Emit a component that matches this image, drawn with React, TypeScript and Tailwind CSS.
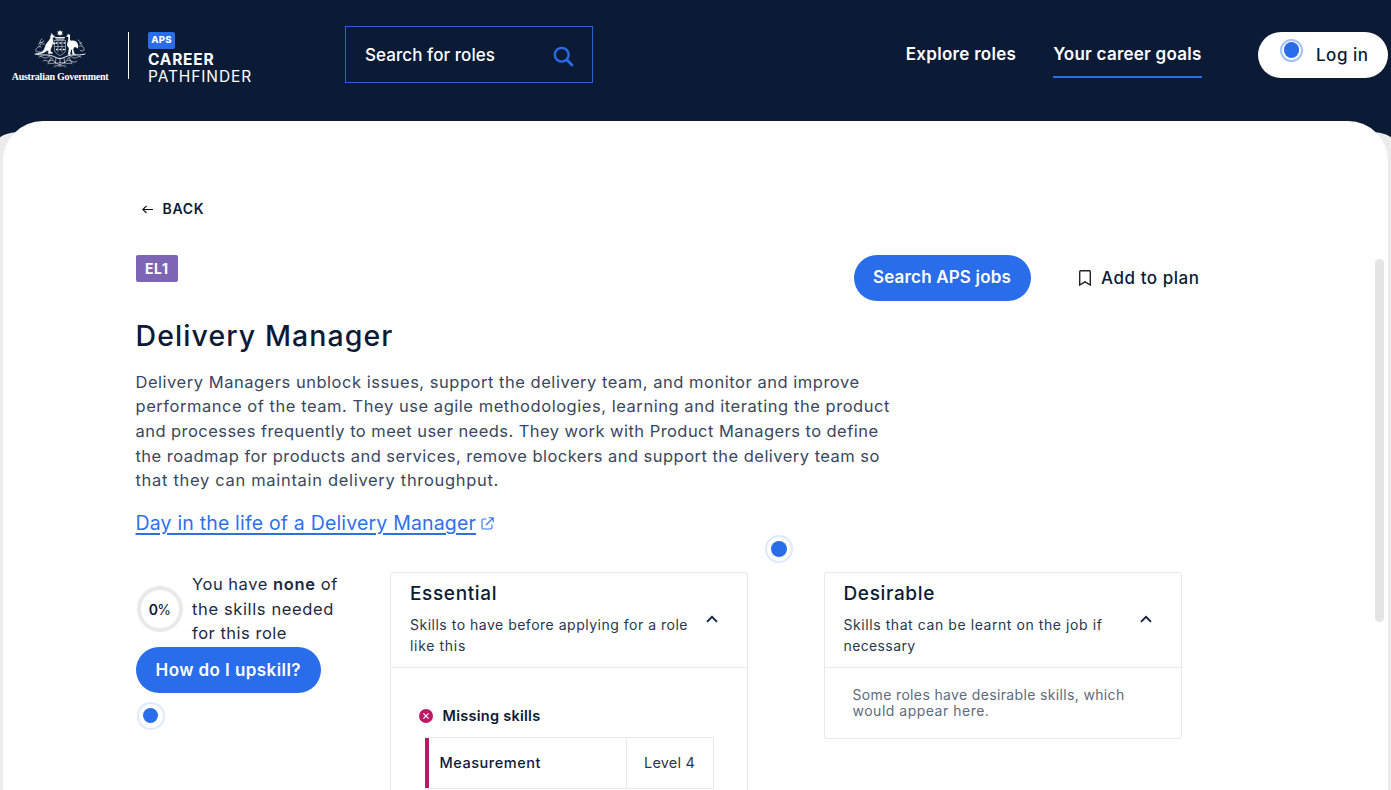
import type { ReactNode } from "react";

function Crest() {
  return (
    <svg width="52" height="38" viewBox="0 0 52 38" fill="none" stroke="#fff" strokeLinecap="round">
      <path d="M26 0l.9 1.6 1.9-.2-.9 1.6.9 1.7-1.9-.2L26 6l-.9-1.5-1.9.2.9-1.7-.9-1.6 1.9.2z" fill="#fff" stroke="none" />
      <path d="M21.5 7.5h9M22 9h8" strokeWidth="1" strokeDasharray="1.6 .6" />
      <path d="M20.5 10.5h11v9.5c0 2.6-3 4.2-5.500 5.500-2.500-1.300-5.500-2.900-5.500-5.500z" strokeWidth=".7" opacity=".7" />
      <path d="M24 11v11M28 11v11M21 16.500h10" strokeWidth=".8" opacity=".6" />
      <path d="M22 13h1M26 13h1M30 13h.5M22.500 19.500h.8M26 19.500h.8M29.500 19.500h.8" strokeWidth="1.300" />
      <path d="M17.800 3.600l1 1.700 1.800.9-.2 1-2 .4c.3 1.600.9 3 .6 4.800l2.200 1-.3.8-2.500-.4c-.2 2.500-1.200 3.800-1.700 5l-.3 2.700 2 1v.9h-4.200l.3-3.300c-1.500.4-2.800 1.600-4.300 2.400-2.300 1.200-5.300 1.500-8.200 1.200 3-.5 5.600-1.300 7.400-3.200 1.600-1.800 1.700-5 3.400-7.200 1.300-1.700 2.600-2.700 3.500-4.700l.3-2.200z" fill="#fff" stroke="#fff" strokeWidth=".4" />
      <path d="M33.300 5.300c.2-1 1.600-1.400 2.400-.6.7.8.3 2.300.2 3.800 0 1.200.4 2 1.500 2.200 2.500-.6 5 .3 6.200 2.700.8 1.700.9 3.700.2 5.300-1-1.500-2.200-1.700-3.600-1.500l-1 2.200 1.200 4 1.500.8v.6h-3.400l-.6-4.700-.8-.7-.9 4.700 1.200.7h-3.500l1-6.700c-1.600-1.400-2.300-3.300-1.500-5.400.5-1.400 1-3 .9-5.800l-2.300-.5z" fill="#fff" stroke="none" />
      <path d="M8 9c-3 1.500-1 4-3.500 5.500M10 11c-3 .5-2.500 3.500-5 6M7 17c-2-1-4 0-5 2.500s2 3 4 2M44 10c3 1 1 4 4 5M45.500 16c2-.5 4.500.5 4.500 3s-3 2.500-4 1M8.500 14h2M6 12.500h2M46 13.500l2-1" strokeWidth=".8" strokeDasharray="2 .7" opacity=".7" />
      <path d="M1 24c6 1.800 12 .2 17 1.800 3 1 5 2.700 8 2.700s5-1.700 8-2.700c5-1.600 11 0 17-1.800" strokeWidth="1" strokeDasharray="2.400 .8" />
      <path d="M5 27c3-2 5 2.500 8 .5s5 .5 6 2M47 27c-3-2-5 2.500-8 .5s-5 .5-6 2M9 31c2-2 4 1 6 0s4-1 6 1 3 1 5 .5 3 1.500 5-.5 4-2 6-1 4 2 6 0M14 34c2-2 4 .5 6-1s3 2 6 1.500 4-3 6-1.500 4-1 6 1M20 37c2-2 4-1 6-1s4-1 6 1M17 28l-3 5M35 28l3 5M26 28v8M22 28l-1 6M30 28l1 6" strokeWidth=".75" strokeDasharray="1.800 .7" opacity=".75" />
    </svg>
  );
}

function Beacon() {
  return (
    <span className="flex size-7 shrink-0 items-center justify-center rounded-full border-2 border-[#dfe9fd]">
      <span className="size-[15.5px] rounded-full bg-[#296deb]" />
    </span>
  );
}

function Chevron() {
  return (
    <svg className="-mt-0.5 mr-[29px] shrink-0" width="12" height="8" viewBox="0 0 12 8" fill="none" stroke="#0b1b36" strokeWidth="1.700">
      <path d="M1 6.800l5-5 5 5" />
    </svg>
  );
}

function SkillCard({ title, children, body, className }: { title: string; children: ReactNode; body: ReactNode; className: string }) {
  return (
    <section className={`w-[358px] rounded-[3px] border border-[#e8e9ea] ${className}`}>
      <header className="flex h-[95px] items-center justify-between border-b border-[#e8e9ea] pl-[19px]">
        <div className="self-start pt-[9px]">
          <h2 className="text-[19px] leading-6 font-medium tracking-[0.034em]">{title}</h2>
          <p className="mt-2 text-[14px] leading-[21px] text-[#2a374e]">{children}</p>
        </div>
        <Chevron />
      </header>
      {body}
    </section>
  );
}

function Header() {
  return (
    <header className="flex h-[121px] items-start">
      <div className="ml-3 flex w-24 flex-col items-center pt-[30px]">
        <Crest />
        <span className="mt-[3px] text-[10px] leading-3 font-bold tracking-[-0.025em] whitespace-nowrap font-['Liberation_Serif',serif]">Australian Government</span>
      </div>
      <div className="mt-8 ml-5 h-[47px] w-px bg-white" />
      <div className="mt-8 ml-[19px] flex w-[110px] flex-col items-start">
        <span className="flex h-[17px] w-[27px] items-center justify-center rounded-[2px] bg-[#296deb] text-[9.500px] font-extrabold tracking-[0.020em]">APS</span>
        <span className="mt-[3px] text-[15.500px] leading-4 font-bold tracking-[0.050em]">CAREER</span>
        <span className="text-[15.500px] leading-[17px] tracking-[0.058em]">PATHFINDER</span>
      </div>
      <div className="mt-[26px] ml-[87px] flex h-[57px] w-[248px] items-center justify-between border border-[#2563d8] pt-[3px] pr-[18px] pl-[19px]">
        <span className="text-[17px] font-medium tracking-[0.004em]">Search for roles</span>
        <svg width="21" height="21" viewBox="0 0 21 21" fill="none" stroke="#296deb" strokeWidth="2.300" strokeLinecap="round">
          <circle cx="8.700" cy="8.700" r="6.900" />
          <path d="M13.800 13.800l5.200 5.200" strokeWidth="2.700" />
        </svg>
      </div>
      <nav className="mt-[42px] ml-auto flex gap-[37px] text-[17px] leading-6 font-semibold">
        <a className="tracking-[0.017em]">Explore roles</a>
        <a className="h-[35.500px] border-b-2 border-[#296deb] tracking-[0.014em]">Your career goals</a>
      </nav>
      <button className="mt-8 mr-[3px] ml-[56px] flex h-[46px] w-[130.500px] items-start rounded-full bg-white text-[#0b1b36]">
        <span className="mt-[6.500px] ml-[22.500px] flex size-[23px] items-center justify-center rounded-full border-2 border-[#a5c1f8]">
          <span className="size-[15.500px] rounded-full bg-[#296deb]" />
        </span>
        <span className="mt-[11px] ml-[13px] text-[17px] leading-6 font-medium tracking-[0.030em]">Log in</span>
      </button>
    </header>
  );
}

export default function App() {
  return (
    <div className="relative isolate h-[790px] w-[1391px] overflow-hidden bg-[#0b1b36] text-white font-['Inter','Liberation_Sans',sans-serif]">
      <div className="absolute -inset-x-4 top-[132px] bottom-0 -z-10 rounded-t-[34px] bg-[#ececec]" />
      <Header />
      <main className="relative mx-[3px] h-[669px] rounded-t-[40px] bg-white pl-[132.500px] text-[#0b1b36]">
        <div className="absolute top-[138px] right-[4px] h-[363px] w-[9px] rounded-full bg-[#e4e4e4]" />
        <div className="flex items-center gap-2.5 pt-[78px] pl-[6px] text-[14px] leading-5 font-semibold tracking-[0.050em]">
          <svg width="11" height="9" viewBox="0 0 11 9" fill="none" stroke="#111" strokeWidth="1.200">
            <path d="M11 4.500H1M4.500.8L.8 4.500l3.700 3.700" />
          </svg>
          BACK
        </div>
        <div className="mt-9 flex h-[46px] items-start">
          <span className="flex h-[26.500px] w-[42.500px] items-center justify-center rounded-[2px] bg-[#7c65b4] text-[14px] font-bold tracking-[0.040em] text-white">EL1</span>
          <button className="ml-[675.500px] flex h-[46px] w-[177px] items-center justify-center rounded-full bg-[#296deb] text-[17px] font-semibold tracking-[0.010em] text-white">Search APS jobs</button>
          <div className="mt-[11px] ml-[48.500px] flex items-center gap-[10px] text-[17px] leading-6 font-medium tracking-[0.032em]">
            <svg width="12" height="16" viewBox="0 0 12 16" fill="none" stroke="#222" strokeWidth="1.400">
              <path d="M.7 15V1.700Q.7.800 1.600.800h8.800q.9 0 .9.900V15L6 11.800z" />
            </svg>
            Add to plan
          </div>
        </div>
        <h1 className="mt-[15px] text-[28.500px] leading-10 font-medium tracking-[0.038em]">Delivery Manager</h1>
        <p className="mt-[13.500px] flex flex-col text-[16.500px] leading-[24.700px] whitespace-nowrap text-[#3a475c]">
          <span className="tracking-[0.0318em]">Delivery Managers unblock issues, support the delivery team, and monitor and improve </span>
          <span className="tracking-[0.0329em]">performance of the team. They use agile methodologies, learning and iterating the product </span>
          <span className="tracking-[0.0272em]">and processes frequently to meet user needs. They work with Product Managers to define </span>
          <span className="tracking-[0.0286em]">the roadmap for products and services, remove blockers and support the delivery team so </span>
          <span className="tracking-[0.0416em]">that they can maintain delivery throughput.</span>
        </p>
        <div className="mt-4 flex items-center gap-[5px] text-[#2f70ea]">
          <a className="text-[19.500px] leading-7 tracking-[0.009em] underline decoration-[1.500px] underline-offset-[3px]">Day in the life of a Delivery Manager</a>
          <svg width="13" height="13" viewBox="0 0 13 13" fill="none" stroke="currentColor" strokeWidth="1.100">
            <path d="M5.500 2H2.600Q1 2 1 3.600v6.800Q1 12 2.600 12h6.800q1.600 0 1.600-1.600V7.500M7.800.800h4.400v4.400M12 1L5 8" />
          </svg>
        </div>
        <div className="relative mt-[35px] flex h-[260px] items-start">
          <div className="absolute -top-[37px] left-[629.500px]"><Beacon /></div>
          <div className="w-[254.500px]">
            <div className="flex h-[75px]">
              <div className="mt-[14px] ml-[1px] flex size-[46px] items-center justify-center rounded-full border-[4.500px] border-[#e8eaea] text-[14px] font-semibold">
                <span className="tracking-[-0.046em]">0<span className="font-normal">%</span></span>
              </div>
              <p className="ml-[9.500px] flex flex-col text-[16.500px] leading-[24.700px] whitespace-nowrap text-[#1b2942]">
                <span className="tracking-[0.032em]">You have <strong className="font-semibold tracking-[0.040em]">none</strong> of </span>
                <span className="tracking-[0.038em]">the skills needed </span>
                <span className="tracking-[0.031em]">for this role</span>
              </p>
            </div>
            <button className="flex h-[45.500px] w-[185.500px] items-center justify-center rounded-full bg-[#296deb] pt-px text-[17px] font-semibold tracking-[0.025em] text-white">How do I upskill?</button>
            <div className="mt-[9px] ml-[1px]"><Beacon /></div>
          </div>
          <SkillCard
            title="Essential"
            className="h-[260px]"
            body={
              <div className="pt-[38px] pl-7">
                <div className="flex items-center gap-[9.500px] text-[14.500px] leading-5 font-semibold tracking-[0.019em]">
                  <svg width="14" height="14" viewBox="0 0 14 14">
                    <circle cx="7" cy="7" r="7" fill="#bf1666" />
                    <path d="M4.400 4.400l5.200 5.200M9.600 4.400L4.400 9.600" stroke="#fff" strokeWidth="1.300" />
                  </svg>
                  Missing skills
                </div>
                <div className="mt-[11px] ml-[6px] flex h-[52px] w-[289px] border border-l-0 border-[#e8e9ea] text-[14.500px]">
                  <div className="w-1 bg-[#bf1666]" />
                  <div className="flex flex-1 items-center pl-[10.500px] font-medium tracking-[0.037em]">Measurement</div>
                  <div className="flex w-[87px] items-center border-l border-[#e8e9ea] pl-[17px] tracking-[0.013em] text-[#2a374e]">Level 4</div>
                </div>
              </div>
            }
          >
            <span className="block tracking-[0.036em]">Skills to have before applying for a role </span>
            <span className="block tracking-[0.048em]">like this</span>
          </SkillCard>
          <SkillCard
            title="Desirable"
            className="ml-[75.500px]"
            body={
              <p className="flex h-[70px] flex-col justify-center pl-7 text-[14px] leading-[16.500px] whitespace-nowrap text-[#5f6a7b]">
                <span className="tracking-[0.025em]">Some roles have desirable skills, which </span>
                <span className="tracking-[0.036em]">would appear here.</span>
              </p>
            }
          >
            <span className="block tracking-[0.041em]">Skills that can be learnt on the job if </span>
            <span className="block tracking-[0.027em]">necessary</span>
          </SkillCard>
        </div>
      </main>
    </div>
  );
}
